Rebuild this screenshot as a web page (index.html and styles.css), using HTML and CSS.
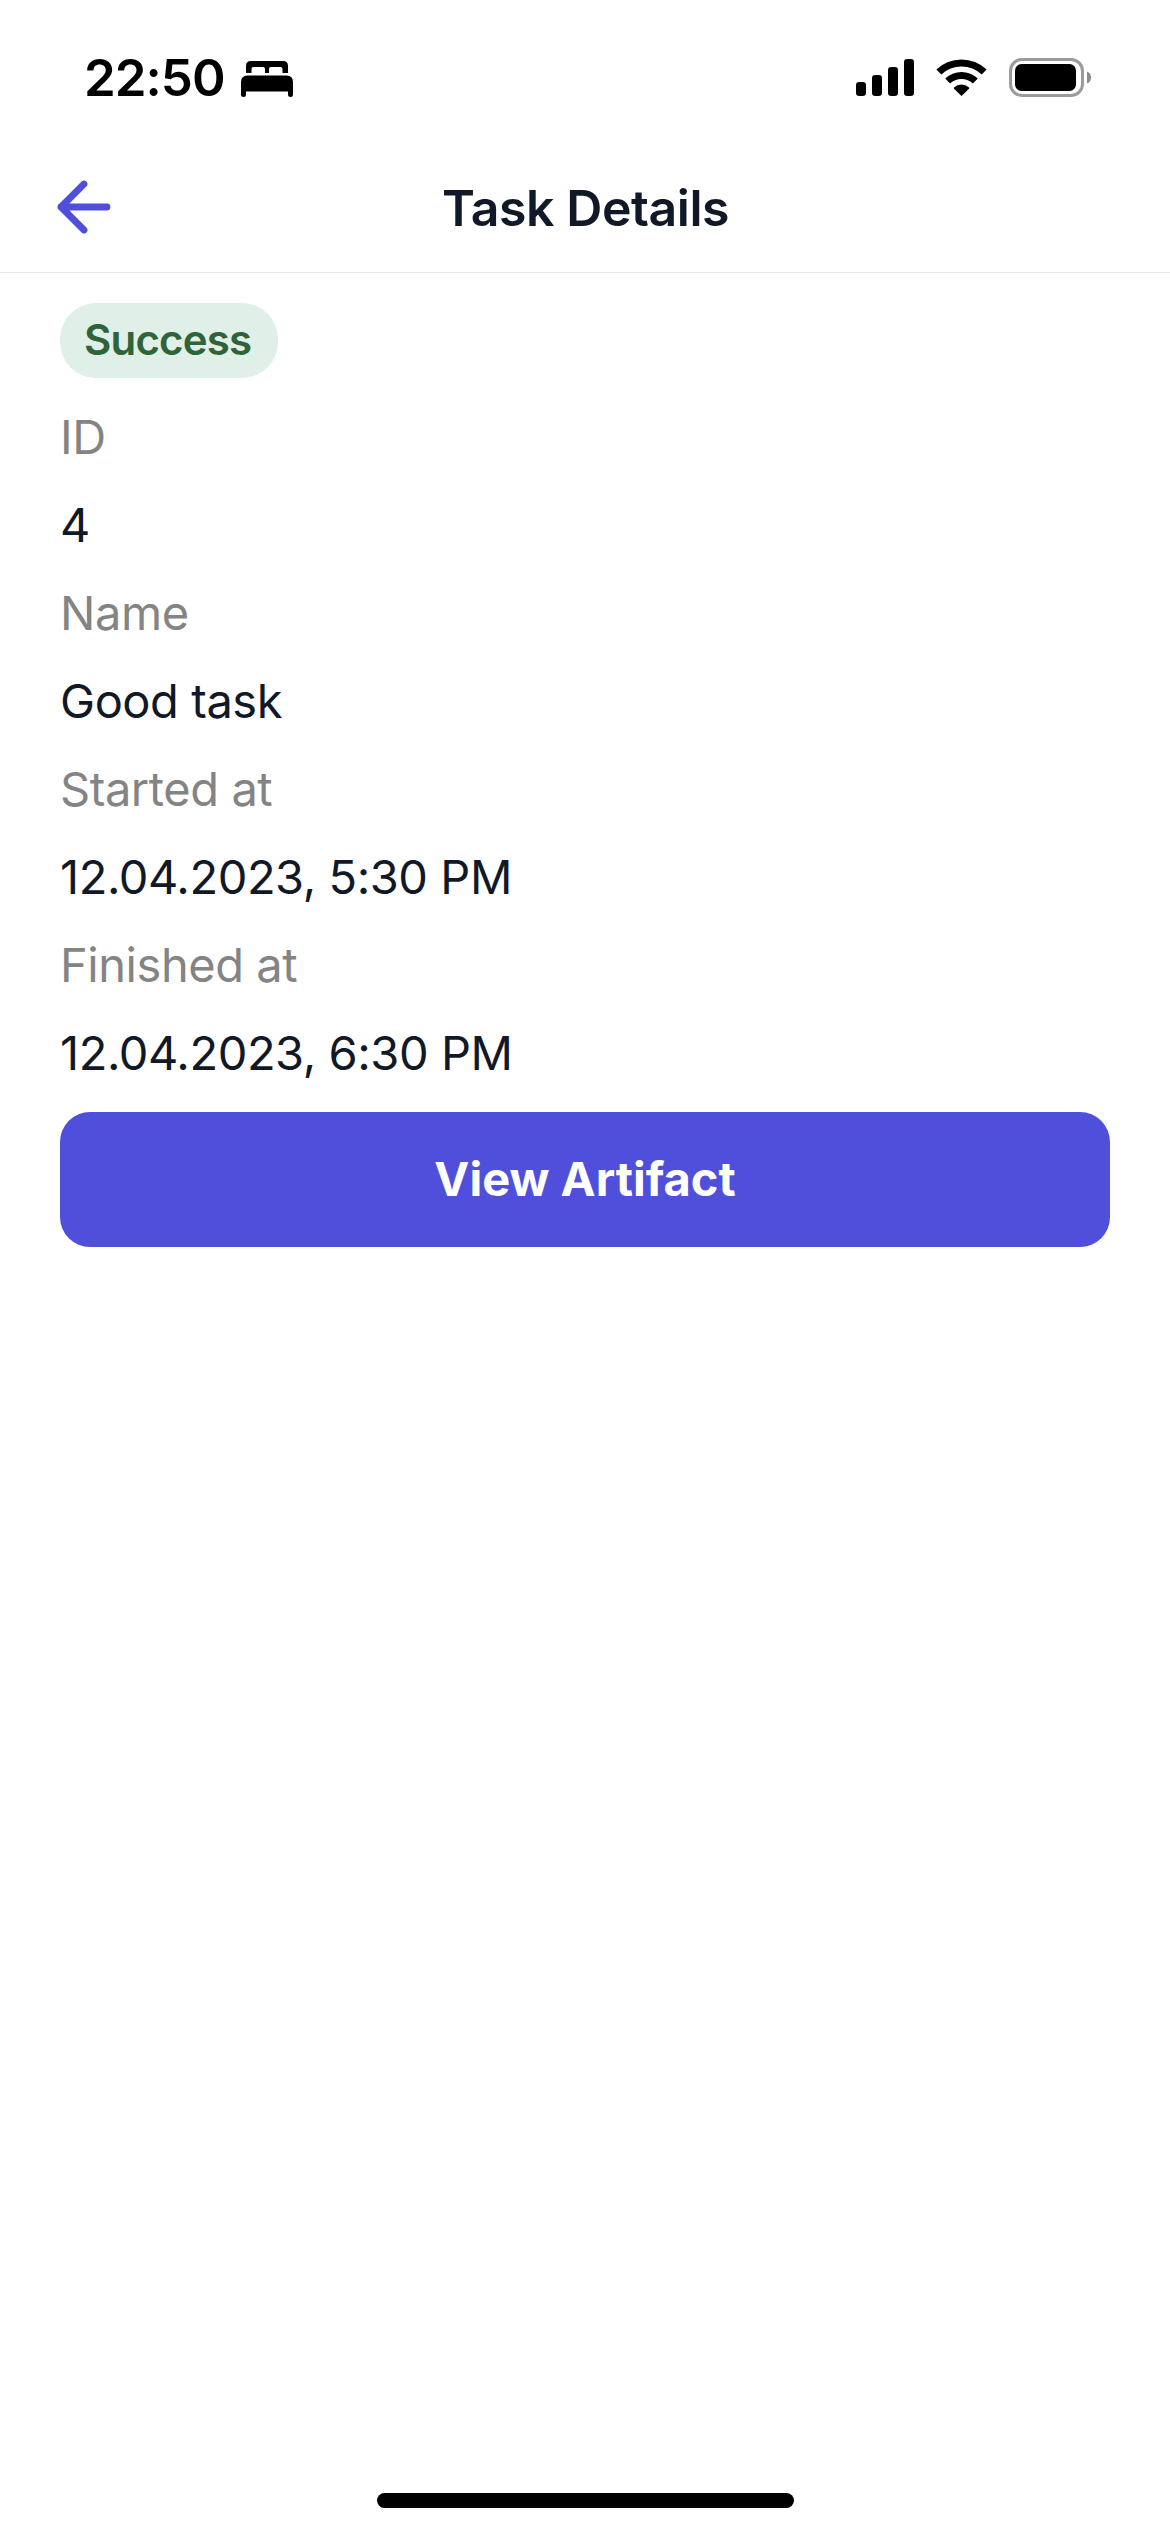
FILE: index.html
```html
<!DOCTYPE html>
<html lang="en">
<head>
<meta charset="utf-8">
<title>Task Details</title>
<link rel="stylesheet" href="styles.css">
</head>
<body>
<div class="screen">
  <div class="status-bar">
    <div class="status-left">
      <span class="time">22:50</span>
      <svg class="bed" width="52" height="36" viewBox="0 0 52 36" aria-hidden="true">
        <path d="M5 12V5q0-5 5-5h32q5 0 5 5v7h-5.500V8q0-2-2-2h-9.500q-2 0-2 2v4h-4V8q0-2-2-2h-9.500q-2 0-2 2v4z"/>
        <path d="M0 21q0-6.500 6.500-6.500h39q6.500 0 6.500 6.500v12.500a2.500 2.500 0 0 1-5 0V30.500H5v3a2.500 2.500 0 0 1-5 0z"/>
      </svg>
    </div>
    <div class="status-right">
      <svg class="signal" width="58" height="37" viewBox="0 0 58 37" aria-hidden="true">
        <rect x="0" y="23" width="10" height="14" rx="3.200"/>
        <rect x="16" y="16" width="10" height="21" rx="3.200"/>
        <rect x="32" y="8" width="10" height="29" rx="3.200"/>
        <rect x="48" y="0" width="10" height="37" rx="3.200"/>
      </svg>
      <svg class="wifi" width="51" height="37" viewBox="0 0 51 37" aria-hidden="true">
        <path d="M.4 10.600A36 36 0 0 1 50.600 10.600L45.700 15.600A29 29 0 0 0 5.300 15.600z"/>
        <path d="M9.200 19.500A23.500 23.500 0 0 1 41.800 19.500L36.900 24.600A16.500 16.500 0 0 0 14.100 24.600z"/>
        <path d="M18 28.500a11 11 0 0 1 15 0q.5.600 0 1.200L25.500 37 18 29.700q-.5-.6 0-1.200z"/>
      </svg>
      <svg class="battery" width="82" height="39" viewBox="0 0 82 39" aria-hidden="true">
        <rect x="1.500" y="1.500" width="72" height="36" rx="11.500" fill="none" stroke="#9b9b9b" stroke-width="3"/>
        <rect x="6" y="6" width="61" height="27" rx="6.500"/>
        <path d="M78 13.500q4 1.500 4 6t-4 6z" fill="#8c8c8c"/>
      </svg>
    </div>
  </div>

  <header class="header">
    <svg class="back" width="54" height="54" viewBox="0 0 54 54" role="img" aria-label="Back">
      <path d="M27 4 L4 27 L27 50 M4 27 H50"/>
    </svg>
    <h1 class="title">Task Details</h1>
  </header>

  <main class="content">
    <span class="badge">Success</span>
    <div class="label">ID</div>
    <div class="value">4</div>
    <div class="label">Name</div>
    <div class="value">Good task</div>
    <div class="label">Started at</div>
    <div class="value">12.04.2023, 5:30 PM</div>
    <div class="label">Finished at</div>
    <div class="value">12.04.2023, 6:30 PM</div>
    <button class="button">View Artifact</button>
  </main>

  <div class="home-indicator"></div>
</div>
</body>
</html>
```

FILE: styles.css
```css
* {
  box-sizing: border-box;
}

body {
  margin: 0;
  background: #fff;
  color: #111827;
  font-family: Inter, "Liberation Sans", sans-serif;
}

.screen {
  display: flex;
  flex-direction: column;
  width: 1170px;
  height: 2532px;
}

.status-bar {
  display: flex;
  justify-content: space-between;
  height: 141px;
  padding: 57px 79px 0 84px;
  color: #000;
}

.status-left,
.status-right {
  display: flex;
  align-items: center;
  height: 41px;
}

.time {
  font-size: 51px;
  font-weight: 600;
  line-height: 41px;
  letter-spacing: -1px;
}

.bed {
  margin: 2px 0 0 16px;
}

.wifi {
  margin-left: 22px;
}

.battery {
  margin-left: 22px;
}

.header {
  display: grid;
  grid-template-columns: 54px 1fr 54px;
  align-items: center;
  height: 132px;
  padding: 1px 57px 0;
  border-bottom: 1px solid #e5e5ea;
}

.back path {
  fill: none;
  stroke: #4f4fdc;
  stroke-width: 6.8;
  stroke-linecap: round;
  stroke-linejoin: round;
}

.title {
  margin: 0;
  padding: 1px 0 0 1px;
  font-size: 50px;
  font-weight: 600;
  line-height: 60px;
  letter-spacing: -0.44px;
  text-align: center;
}

.content {
  display: flex;
  flex-direction: column;
  align-items: flex-start;
  gap: 30px;
  padding: 30px 60px;
  font-size: 47px;
  line-height: 58px;
  letter-spacing: -0.44px;
}

.badge {
  width: 218px;
  height: 75px;
  padding: 0 24px;
  border-radius: 36px;
  background: #e0efe8;
  color: #2f6438;
  font-size: 42px;
  font-weight: 600;
  line-height: 74px;
  letter-spacing: -0.8px;
}

.label {
  color: #848484;
}

.button {
  align-self: stretch;
  height: 135px;
  padding: 0 0 2px;
  border: 0;
  border-radius: 30px;
  background: #4f4fdc;
  color: #fff;
  font: 700 47px/58px Inter, "Liberation Sans", sans-serif;
}

.home-indicator {
  align-self: center;
  width: 417px;
  height: 15px;
  margin: auto 0 24px 1px;
  border-radius: 8px;
  background: #000;
}
```
